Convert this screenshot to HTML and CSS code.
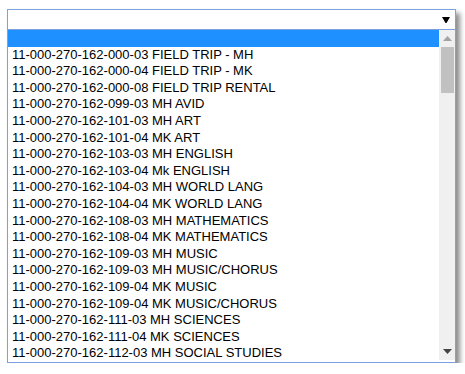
FILE: index.html
```html
<!DOCTYPE html>
<html lang="en">
<head>
    <meta charset="UTF-8">
    <title>Account select</title>
    <link rel="stylesheet" href="styles.css">
</head>
<body>
    <div class="dropdown">
        <div class="select-box">
            <svg class="select-arrow" width="8" height="6" viewBox="0 0 8 6"><path d="M0 0H8L4.5 6H3.5Z" fill="#000"/></svg>
        </div>
        <div class="list">
            <ul class="options">
                <li class="selected"></li>
                <li>11-000-270-162-000-03 FIELD TRIP - MH</li>
                <li>11-000-270-162-000-04 FIELD TRIP - MK</li>
                <li>11-000-270-162-000-08 FIELD TRIP RENTAL</li>
                <li>11-000-270-162-099-03 MH AVID</li>
                <li>11-000-270-162-101-03 MH ART</li>
                <li>11-000-270-162-101-04 MK ART</li>
                <li>11-000-270-162-103-03 MH ENGLISH</li>
                <li>11-000-270-162-103-04 Mk ENGLISH</li>
                <li>11-000-270-162-104-03 MH WORLD LANG</li>
                <li>11-000-270-162-104-04 MK WORLD LANG</li>
                <li>11-000-270-162-108-03 MH MATHEMATICS</li>
                <li>11-000-270-162-108-04 MK MATHEMATICS</li>
                <li>11-000-270-162-109-03 MH MUSIC</li>
                <li>11-000-270-162-109-03 MH MUSIC/CHORUS</li>
                <li>11-000-270-162-109-04 MK MUSIC</li>
                <li>11-000-270-162-109-04 MK MUSIC/CHORUS</li>
                <li>11-000-270-162-111-03 MH SCIENCES</li>
                <li>11-000-270-162-111-04 MK SCIENCES</li>
                <li>11-000-270-162-112-03 MH SOCIAL STUDIES</li>
            </ul>
            <div class="scrollbar">
                <div class="scroll-btn">
                    <svg width="9" height="5" viewBox="0 0 9 5"><path d="M4.5 0L9 5H0Z" fill="#a3a3a3"/></svg>
                </div>
                <div class="scroll-track">
                    <div class="scroll-thumb"></div>
                </div>
                <div class="scroll-btn">
                    <svg width="9" height="5" viewBox="0 0 9 5"><path d="M0 0H9L4.5 5Z" fill="#444"/></svg>
                </div>
            </div>
        </div>
    </div>
</body>
</html>
```

FILE: styles.css
```css
body {
    margin: 0;
    padding: 0;
    background: #fff;
    font-family: 'Liberation Sans', Arial, sans-serif;
}
.dropdown {
    width: 449px;
    margin: 9px 0 0 7px;
    box-shadow: 4px 4px 5px rgba(0, 0, 0, 0.45);
}
.select-box {
    height: 21px;
    box-sizing: border-box;
    border: 1px solid #7ba2e0;
    background: #fff;
    display: flex;
    align-items: center;
    justify-content: flex-end;
    padding-right: 5px;
}
.select-arrow {
    display: block;
    margin-top: 1px;
}
.list {
    display: flex;
    border: 1px solid #7ba2e0;
    border-top: none;
    background: #fff;
}
.options {
    flex: 1;
    list-style: none;
    margin: 0;
    padding: 0;
}
.options li {
    height: 16.6px;
    line-height: 16.6px;
    padding-left: 4px;
    font-size: 13px;
    color: #000;
    white-space: nowrap;
}
.options li.selected {
    background: #1e90ff;
}
.scrollbar {
    width: 16px;
    background: #f0f0f0;
    display: flex;
    flex-direction: column;
    margin-bottom: 2px;
}
.scroll-btn {
    height: 17px;
    display: flex;
    align-items: center;
    justify-content: center;
    padding-left: 1px;
}
.scroll-track {
    flex: 1;
}
.scroll-thumb {
    height: 46px;
    margin: 0 1px 0 2px;
    background: #c1c1c1;
}
```
